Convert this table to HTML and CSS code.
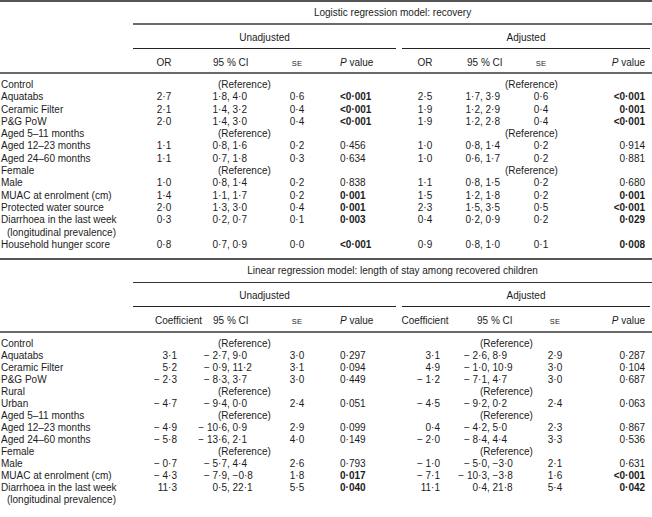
FILE: index.html
```html
<!DOCTYPE html>
<html>
<head>
<meta charset="utf-8">
<link rel="stylesheet" href="styles.css">
</head>
<body>
<table class="t t-log">
  <colgroup>
    <col class="c-lab"><col class="c-or"><col class="c-ci"><col class="c-se"><col class="c-p">
    <col class="c-aor"><col class="c-aci"><col class="c-ase"><col class="c-ap">
  </colgroup>
  <thead>
    <tr class="r-title"><th></th><th colspan="8" class="title">Logistic regression model: recovery</th></tr>
    <tr class="r-group"><th></th><th colspan="4"><div class="grp grp-u">Unadjusted</div></th><th colspan="4"><div class="grp grp-a">Adjusted</div></th></tr>
    <tr class="r-cols">
      <th></th><th class="h-est">OR</th><th class="h-ci">95 % CI</th><th class="h-se"><span class="sc">SE</span></th><th class="h-p"><i>P</i> value</th>
      <th class="h-aest">OR</th><th class="h-aci">95 % CI</th><th class="h-ase"><span class="sc">SE</span></th><th class="h-ap"><i>P</i> value</th>
    </tr>
  </thead>
  <tbody>
    <tr><td class="lab">Control</td><td></td><td colspan="2" class="ref">(Reference)</td><td></td><td></td><td colspan="2" class="aref">(Reference)</td><td></td></tr>
    <tr><td class="lab">Aquatabs</td><td class="est">2·7</td><td class="ci"><span class="lo">1·8</span>, 4·0</td><td class="se">0·6</td><td class="p"><b>&lt;0·001</b></td><td class="aest">2·5</td><td class="aci"><span class="alo">1·7</span>, 3·9</td><td class="ase">0·6</td><td class="ap"><b>&lt;0·001</b></td></tr>
    <tr><td class="lab">Ceramic Filter</td><td class="est">2·1</td><td class="ci"><span class="lo">1·4</span>, 3·2</td><td class="se">0·4</td><td class="p"><b>&lt;0·001</b></td><td class="aest">1·9</td><td class="aci"><span class="alo">1·2</span>, 2·9</td><td class="ase">0·4</td><td class="ap"><b>0·001</b></td></tr>
    <tr><td class="lab">P&amp;G PoW</td><td class="est">2·0</td><td class="ci"><span class="lo">1·4</span>, 3·0</td><td class="se">0·4</td><td class="p"><b>&lt;0·001</b></td><td class="aest">1·9</td><td class="aci"><span class="alo">1·2</span>, 2·8</td><td class="ase">0·4</td><td class="ap"><b>&lt;0·001</b></td></tr>
    <tr><td class="lab">Aged 5–11 months</td><td></td><td colspan="2" class="ref">(Reference)</td><td></td><td></td><td colspan="2" class="aref">(Reference)</td><td></td></tr>
    <tr><td class="lab">Aged 12–23 months</td><td class="est">1·1</td><td class="ci"><span class="lo">0·8</span>, 1·6</td><td class="se">0·2</td><td class="p">0·456</td><td class="aest">1·0</td><td class="aci"><span class="alo">0·8</span>, 1·4</td><td class="ase">0·2</td><td class="ap">0·914</td></tr>
    <tr><td class="lab">Aged 24–60 months</td><td class="est">1·1</td><td class="ci"><span class="lo">0·7</span>, 1·8</td><td class="se">0·3</td><td class="p">0·634</td><td class="aest">1·0</td><td class="aci"><span class="alo">0·6</span>, 1·7</td><td class="ase">0·2</td><td class="ap">0·881</td></tr>
    <tr><td class="lab">Female</td><td></td><td colspan="2" class="ref">(Reference)</td><td></td><td></td><td colspan="2" class="aref">(Reference)</td><td></td></tr>
    <tr><td class="lab">Male</td><td class="est">1·0</td><td class="ci"><span class="lo">0·8</span>, 1·4</td><td class="se">0·2</td><td class="p">0·838</td><td class="aest">1·1</td><td class="aci"><span class="alo">0·8</span>, 1·5</td><td class="ase">0·2</td><td class="ap">0·680</td></tr>
    <tr><td class="lab">MUAC at enrolment (cm)</td><td class="est">1·4</td><td class="ci"><span class="lo">1·1</span>, 1·7</td><td class="se">0·2</td><td class="p"><b>0·001</b></td><td class="aest">1·5</td><td class="aci"><span class="alo">1·2</span>, 1·8</td><td class="ase">0·2</td><td class="ap"><b>0·001</b></td></tr>
    <tr><td class="lab">Protected water source</td><td class="est">2·0</td><td class="ci"><span class="lo">1·3</span>, 3·0</td><td class="se">0·4</td><td class="p"><b>0·001</b></td><td class="aest">2·3</td><td class="aci"><span class="alo">1·5</span>, 3·5</td><td class="ase">0·5</td><td class="ap"><b>&lt;0·001</b></td></tr>
    <tr><td class="lab">Diarrhoea in the last week<span class="sub">(longitudinal prevalence)</span></td><td class="est">0·3</td><td class="ci"><span class="lo">0·2</span>, 0·7</td><td class="se">0·1</td><td class="p"><b>0·003</b></td><td class="aest">0·4</td><td class="aci"><span class="alo">0·2</span>, 0·9</td><td class="ase">0·2</td><td class="ap"><b>0·029</b></td></tr>
    <tr><td class="lab">Household hunger score</td><td class="est">0·8</td><td class="ci"><span class="lo">0·7</span>, 0·9</td><td class="se">0·0</td><td class="p"><b>&lt;0·001</b></td><td class="aest">0·9</td><td class="aci"><span class="alo">0·8</span>, 1·0</td><td class="ase">0·1</td><td class="ap"><b>0·008</b></td></tr>
  </tbody>
</table>
<table class="t t-lin">
  <colgroup>
    <col class="c-lab"><col class="c-or"><col class="c-ci"><col class="c-se"><col class="c-p">
    <col class="c-aor"><col class="c-aci"><col class="c-ase"><col class="c-ap">
  </colgroup>
  <thead>
    <tr class="r-title"><th></th><th colspan="8" class="title">Linear regression model: length of stay among recovered children</th></tr>
    <tr class="r-group"><th></th><th colspan="4"><div class="grp grp-u">Unadjusted</div></th><th colspan="4"><div class="grp grp-a">Adjusted</div></th></tr>
    <tr class="r-cols">
      <th></th><th class="h-est">Coefficient</th><th class="h-ci">95 % CI</th><th class="h-se"><span class="sc">SE</span></th><th class="h-p"><i>P</i> value</th>
      <th class="h-aest">Coefficient</th><th class="h-aci">95 % CI</th><th class="h-ase"><span class="sc">SE</span></th><th class="h-ap"><i>P</i> value</th>
    </tr>
  </thead>
  <tbody>
    <tr><td class="lab">Control</td><td></td><td colspan="2" class="ref">(Reference)</td><td></td><td></td><td colspan="2" class="aref">(Reference)</td><td></td></tr>
    <tr><td class="lab">Aquatabs</td><td class="est">3·1</td><td class="ci"><span class="lo">− 2·7</span>, 9·0</td><td class="se">3·0</td><td class="p">0·297</td><td class="aest">3·1</td><td class="aci"><span class="alo">− 2·6</span>, 8·9</td><td class="ase">2·9</td><td class="ap">0·287</td></tr>
    <tr><td class="lab">Ceramic Filter</td><td class="est">5·2</td><td class="ci"><span class="lo">− 0·9</span>, 11·2</td><td class="se">3·1</td><td class="p">0·094</td><td class="aest">4·9</td><td class="aci"><span class="alo">− 1·0</span>, 10·9</td><td class="ase">3·0</td><td class="ap">0·104</td></tr>
    <tr><td class="lab">P&amp;G PoW</td><td class="est">− 2·3</td><td class="ci"><span class="lo">− 8·3</span>, 3·7</td><td class="se">3·0</td><td class="p">0·449</td><td class="aest">− 1·2</td><td class="aci"><span class="alo">− 7·1</span>, 4·7</td><td class="ase">3·0</td><td class="ap">0·687</td></tr>
    <tr><td class="lab">Rural</td><td></td><td colspan="2" class="ref">(Reference)</td><td></td><td></td><td colspan="2" class="aref">(Reference)</td><td></td></tr>
    <tr><td class="lab">Urban</td><td class="est">− 4·7</td><td class="ci"><span class="lo">− 9·4</span>, 0·0</td><td class="se">2·4</td><td class="p">0·051</td><td class="aest">− 4·5</td><td class="aci"><span class="alo">− 9·2</span>, 0·2</td><td class="ase">2·4</td><td class="ap">0·063</td></tr>
    <tr><td class="lab">Aged 5–11 months</td><td></td><td colspan="2" class="ref">(Reference)</td><td></td><td></td><td colspan="2" class="aref">(Reference)</td><td></td></tr>
    <tr><td class="lab">Aged 12–23 months</td><td class="est">− 4·9</td><td class="ci"><span class="lo">− 10·6</span>, 0·9</td><td class="se">2·9</td><td class="p">0·099</td><td class="aest">0·4</td><td class="aci"><span class="alo">− 4·2</span>, 5·0</td><td class="ase">2·3</td><td class="ap">0·867</td></tr>
    <tr><td class="lab">Aged 24–60 months</td><td class="est">− 5·8</td><td class="ci"><span class="lo">− 13·6</span>, 2·1</td><td class="se">4·0</td><td class="p">0·149</td><td class="aest">− 2·0</td><td class="aci"><span class="alo">− 8·4</span>, 4·4</td><td class="ase">3·3</td><td class="ap">0·536</td></tr>
    <tr><td class="lab">Female</td><td></td><td colspan="2" class="ref">(Reference)</td><td></td><td></td><td colspan="2" class="aref">(Reference)</td><td></td></tr>
    <tr><td class="lab">Male</td><td class="est">− 0·7</td><td class="ci"><span class="lo">− 5·7</span>, 4·4</td><td class="se">2·6</td><td class="p">0·793</td><td class="aest">− 1·0</td><td class="aci"><span class="alo">− 5·0</span>, −3·0</td><td class="ase">2·1</td><td class="ap">0·631</td></tr>
    <tr><td class="lab">MUAC at enrolment (cm)</td><td class="est">− 4·3</td><td class="ci"><span class="lo">− 7·9</span>, −0·8</td><td class="se">1·8</td><td class="p"><b>0·017</b></td><td class="aest">− 7·1</td><td class="aci"><span class="alo">− 10·3</span>, −3·8</td><td class="ase">1·6</td><td class="ap"><b>&lt;0·001</b></td></tr>
    <tr><td class="lab">Diarrhoea in the last week<span class="sub">(longitudinal prevalence)</span></td><td class="est">11·3</td><td class="ci"><span class="lo">0·5</span>, 22·1</td><td class="se">5·5</td><td class="p"><b>0·040</b></td><td class="aest">11·1</td><td class="aci"><span class="alo">0·4</span>, 21·8</td><td class="ase">5·4</td><td class="ap"><b>0·042</b></td></tr>
  </tbody>
</table>
</body>
</html>
```
FILE: styles.css
```css
html, body {
  margin: 0;
  padding: 0;
  background: #fff;
}
body {
  font-family: "Liberation Sans", Arial, sans-serif;
  font-size: 10px;
  line-height: 12px;
  color: #1c1c1c;
}
.t {
  width: 652px;
  table-layout: fixed;
  border-collapse: separate;
  border-spacing: 0;
}
.t th, .t td {
  padding: 0;
  font-weight: normal;
  white-space: nowrap;
  vertical-align: top;
  text-align: left;
}
.t b { font-weight: bold; }

.t-log { border-top: 2px solid #555; }
.t-log tbody td { line-height: 12.3px; }

/* column widths */
.c-lab { width: 133px; }
.c-or  { width: 62px; }
.c-ci  { width: 85px; }
.c-se  { width: 40px; }
.c-p   { width: 80px; }
.t-log .c-aor { width: 50px; }
.t-log .c-aci { width: 70px; }
.t-log .c-ase { width: 50px; }
.t-log .c-ap  { width: 82px; }
.t-lin .c-aor { width: 55px; }
.t-lin .c-aci { width: 75px; }
.t-lin .c-ase { width: 50px; }
.t-lin .c-ap  { width: 72px; }

/* title row */
.r-title th { padding: 5px 0 4px; }
.r-title .title { text-align: center; border-bottom: 2px solid #6a6a6a; }
.t-lin .r-title th { padding: 5px 0 5px; }
.t-lin .r-title .title { border-bottom: 1px solid #333; }

/* group row */
.r-group th { padding-top: 7px; }
.grp {
  text-align: center;
  padding-bottom: 4px;
  border-bottom: 1px solid #222;
}
.grp-u { margin-right: 4px; }
.grp-a { margin: 0 2px; }

/* column header row */
.r-cols th { padding: 8px 0 2px; border-bottom: 2px solid #6a6a6a; }
.t-lin .r-cols th { padding: 8px 0 3px; }
.h-est { text-align: center !important; }
.t-lin .h-est { padding-left: 22px !important; }
.h-ci { padding-left: 18px !important; }
.h-se { text-align: center !important; padding-right: 6px !important; }
.h-p { padding-left: 20px !important; }
.h-aest { text-align: center !important; }
.t-lin .h-aest { padding-right: 5px !important; }
.t-log .h-aci { padding-left: 17px !important; }
.t-lin .h-aci { padding-left: 22px !important; }
.h-ase { text-align: center !important; }
.t-log .h-ase { padding-right: 8px !important; }
.h-ap { text-align: right !important; padding-right: 7px !important; }
.sc { font-size: 7.5px; letter-spacing: 0.2px; }

/* body */
.t-log tbody tr:first-child td { padding-top: 5px; }
.t-log tbody tr:last-child td { padding-bottom: 7px; border-bottom: 2px solid #555; }
.t-lin tbody tr:first-child td { padding-top: 5px; }
.t-lin tbody tr:last-child td { padding-bottom: 16px; border-bottom: 2px solid #555; }

.lab { padding-left: 1px !important; }
.sub { display: block; padding-left: 6px; }

.est { text-align: center !important; }
.t-lin .est { text-align: right !important; padding-right: 18px !important; }
.lo { display: inline-block; width: 32px; text-align: right; }
.se { text-align: center !important; padding-right: 6px !important; }
.p { padding-left: 20px !important; }
.ref { padding-left: 23px !important; }

.aest { text-align: center !important; }
.t-lin .aest { text-align: right !important; padding-right: 15px !important; }
.t-log .alo { display: inline-block; width: 30px; text-align: right; }
.t-lin .alo { display: inline-block; width: 32px; text-align: right; }
.ase { text-align: center !important; }
.t-log .ase { padding-right: 8px !important; }
.ap { text-align: right !important; padding-right: 7px !important; }
.t-log .aref { padding-left: 55px !important; }
.t-lin .aref { padding-left: 25px !important; }
```
